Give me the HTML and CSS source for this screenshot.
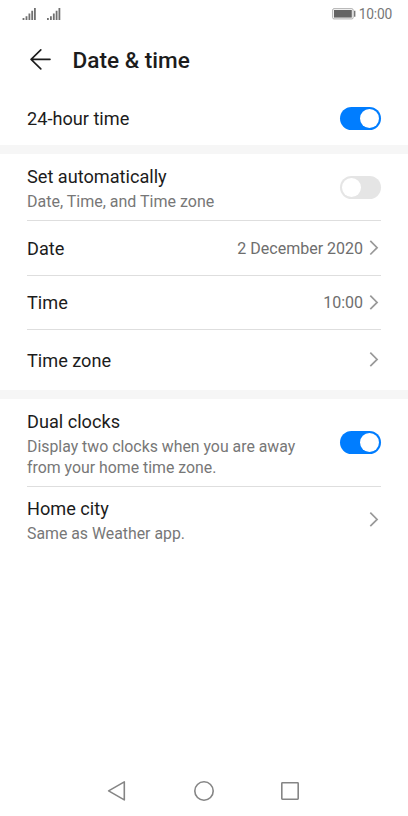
FILE: index.html
```html
<!DOCTYPE html>
<html lang="en">
<head>
<meta charset="utf-8">
<title>Date &amp; time</title>
<link rel="stylesheet" href="styles.css">
</head>
<body>
<div class="screen">
  <div class="status">
    <svg class="signals" width="40" height="14" viewBox="0 0 40 14" fill="#707070">
      <path d="M.6 11h1.8v2H.6zM3.6 9.2h1.8V13H3.6zM6.5 6.4h1.8V13H6.5zM9.3 3.8h1.8V13H9.3zM12 1h1.8v12H12z"/>
      <path d="M25 11h1.8v2H25zM28 9.2h1.8V13H28zM30.9 6.4h1.8V13h-1.8zM33.7 3.8h1.8V13h-1.8zM36.5 1h1.8v12h-1.8z"/>
    </svg>
    <div class="status-right">
      <svg width="24" height="12" viewBox="0 0 24 12">
        <rect x=".7" y=".7" width="20.4" height="10.2" rx="1.2" fill="#fff" stroke="#aaa"/>
        <rect x="2" y="2" width="17.8" height="7.6" fill="#646464"/>
        <path d="M22 2.8h1.4v6H22z" fill="#777"/>
      </svg>
      <span class="clock">10:00</span>
    </div>
  </div>
  <header class="header">
    <svg width="22" height="22" viewBox="0 0 22 22" fill="none" stroke="#1c1c1c" stroke-width="1.6" stroke-linecap="round" stroke-linejoin="round">
      <path d="M21 10.4H2M11.8.9 2.1 10.4l9.7 9.5"/>
    </svg>
    <h1>Date &amp; time</h1>
  </header>
  <section class="group">
    <div class="row hour"><span class="title">24-hour time</span><span class="switch on"></span></div>
  </section>
  <section class="group">
    <div class="row auto">
      <div><div class="title">Set automatically</div><div class="sub">Date, Time, and Time zone</div></div>
      <span class="switch"></span>
    </div>
    <div class="row date"><span class="title">Date</span><span class="value">2 December 2020</span><svg class="chevron" viewBox="0 0 10 16"><path d="m1.3.9 6.8 6.8-6.8 6.8"/></svg></div>
    <div class="row time"><span class="title">Time</span><span class="value">10:00</span><svg class="chevron" viewBox="0 0 10 16"><path d="m1.3.6 6.8 6.8-6.8 6.8"/></svg></div>
    <div class="row zone"><span class="title">Time zone</span><svg class="chevron" viewBox="0 0 10 16"><path d="m1.3.6 6.8 6.8-6.8 6.8"/></svg></div>
  </section>
  <section class="group">
    <div class="row dual">
      <div><div class="title">Dual clocks</div><div class="sub">Display two clocks when you are away<br>from your home time zone.</div></div>
      <span class="switch on"></span>
    </div>
    <div class="row home">
      <div><div class="title">Home city</div><div class="sub">Same as Weather app.</div></div>
      <svg class="chevron" viewBox="0 0 10 16"><path d="m1.3.6 6.8 6.8-6.8 6.8"/></svg>
    </div>
  </section>
  <nav class="nav">
    <svg viewBox="0 0 22 22"><path d="M18.3 1.9v18L2.6 10.9z"/></svg>
    <svg viewBox="0 0 22 22"><circle cx="11" cy="11" r="9.2"/></svg>
    <svg viewBox="0 0 22 22"><rect x="2.8" y="2.8" width="16.4" height="16.4" rx=".6"/></svg>
  </nav>
</div>
</body>
</html>
```

FILE: styles.css
```css
* { box-sizing: border-box; }
body { margin: 0; background: #fff; font-family: Roboto, sans-serif; color: #1c1c1c; }
.screen { height: 816px; display: flex; flex-direction: column; }
.status { height: 28px; padding: 0 16px 0 22px; display: flex; justify-content: space-between; align-items: center; }
.status-right { display: flex; align-items: center; gap: 3px; }
.clock { font-size: 13.8px; line-height: 16px; color: #777; letter-spacing: -0.2px; }
.header { height: 63px; padding: 0 29px; display: flex; align-items: center; gap: 21.5px; }
h1 { margin: 2px 0 0; font-size: 22.6px; line-height: 28px; font-weight: 500; }
.header svg { flex: none; }
.group + .group { border-top: 9px solid #f6f6f6; }
.row { margin: 0 27px; display: flex; align-items: center; justify-content: space-between; }
.row + .row { border-top: 1px solid #dedede; }
.hour { height: 54px; }
.auto { height: 66px; }
.date { height: 55px; }
.time { height: 54px; }
.zone { height: 61px; }
.dual { height: 87px; }
.home { height: 66px; }
.title { font-size: 18.15px; line-height: 26px; }
.hour .title, .date .title, .date .value, .zone .title { padding-top: 2px; }
.auto .title, .dual .title { line-height: 25px; padding: 1px 0; }
.sub { font-size: 15.85px; line-height: 21px; color: #777; padding-top: 1px; }
.auto .sub { font-size: 16px; }
.value { margin-left: auto; font-size: 16px; line-height: 22px; color: #6e6e6e; }
.chevron { width: 10px; height: 16px; flex: none; margin: 0 2px 0 6px; fill: none; stroke: #999; stroke-width: 1.7; }
.switch { width: 41.5px; height: 23px; padding: 2px; border-radius: 12px; background: #e5e5e5; display: flex; flex: none; }
.switch::before { content: ""; width: 19px; height: 19px; border-radius: 50%; background: #fff; }
.switch.on { background: #007dff; justify-content: flex-end; }
.nav { margin-top: auto; height: 50px; padding: 0 107px 0 106px; display: flex; align-items: center; justify-content: space-between; }
.nav svg { width: 22px; height: 22px; fill: none; stroke: #858585; stroke-width: 1.6; stroke-linejoin: round; }
```
